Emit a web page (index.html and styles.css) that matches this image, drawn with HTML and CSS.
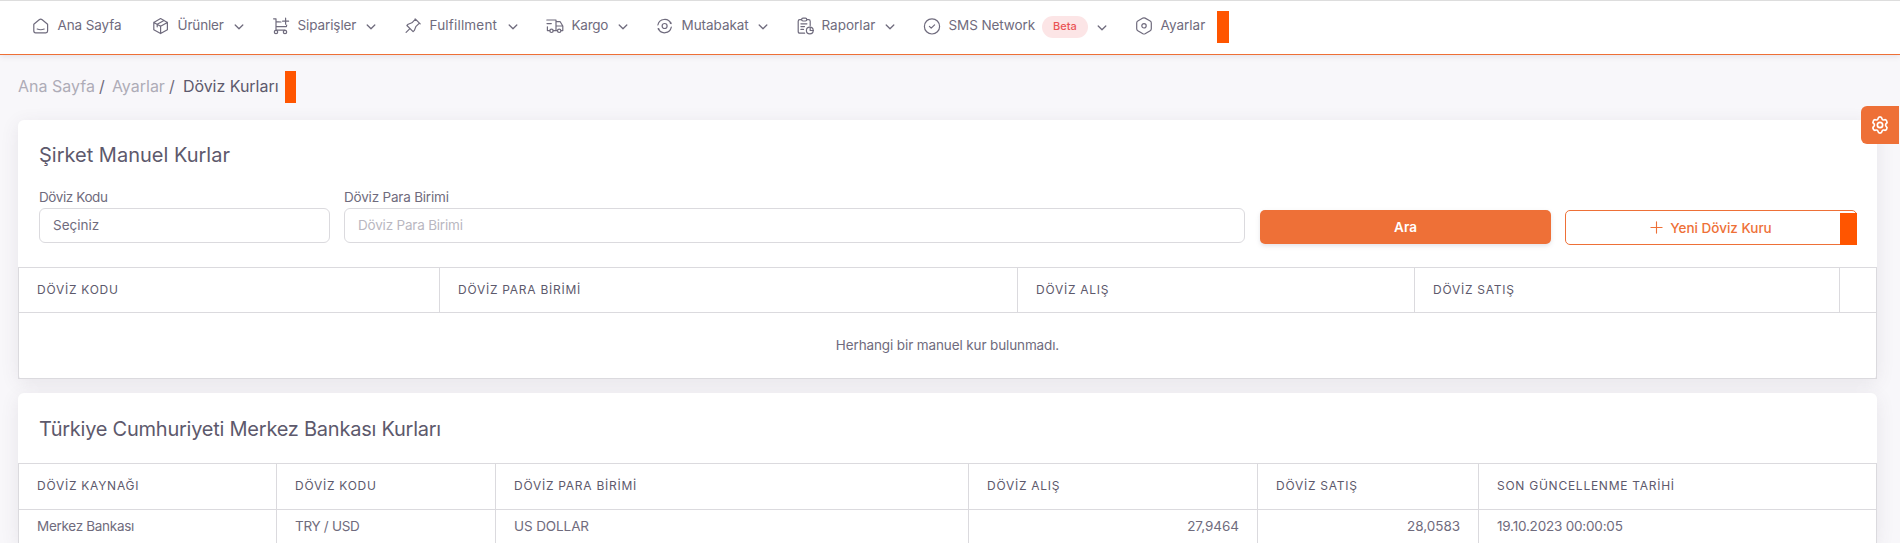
FILE: index.html
```
<!DOCTYPE html>
<html lang="tr">
<head>
<meta charset="utf-8">
<title>Döviz Kurları</title>
<link rel="stylesheet" href="styles.css">
</head>
<body>
<svg class="defs" width="0" height="0"><symbol id="chev" viewBox="0 0 10 8"><path d="M1.2 2 5 5.8 8.8 2"/></symbol></svg>
<nav class="nav">
  <a class="item"><svg class="icon" viewBox="0 0 18 18"><path d="M1.8 7.2 7.2 2.7q1.5-1.2 3 0l5.4 4.5v6.9q0 1.7-1.7 1.7H3.5q-1.7 0-1.7-1.7zM5.2 12q3.5 1.5 7 0"/></svg><span class="label l1">Ana Sayfa</span></a>
  <a class="item"><svg class="icon" viewBox="0 0 18 18"><path d="m8.6 1.6 6.8 3.8v7.4l-6.8 3.8-6.8-3.8V5.4zM1.8 5.4l6.8 3.8 6.8-3.8M8.6 9.2v7.4M12 3.5 5.2 7.3v2.5"/></svg><span class="label l2">Ürünler</span><svg class="chev"><use href="#chev"/></svg></a>
  <a class="item"><svg class="icon" viewBox="0 0 18 18"><circle cx="4" cy="15" r="1.7"/><circle cx="13" cy="15" r="1.7"/><path d="M13 13.2H4V1.8H1.6M4 4.6l5 .4M4 9.6h10.4l.3-1.6M10.6 4.2h6M13.6 1.2v6"/></svg><span class="label l3">Siparişler</span><svg class="chev"><use href="#chev"/></svg></a>
  <a class="item"><svg class="icon" viewBox="0 0 18 18"><path d="m11.500 2.200-3.600 3.600-3.700 1.400-1.300 1.300 6.200 6.200 1.300-1.300 1.400-3.700 3.600-3.600zM5.900 11.600l-3.800 3.800M11.100 1.800l5.100 5.100"/></svg><span class="label l4">Fulfillment</span><svg class="chev"><use href="#chev"/></svg></a>
  <a class="item"><svg class="icon" viewBox="0 0 18 18"><circle cx="5.5" cy="13.8" r="1.7"/><circle cx="13.2" cy="13.8" r="1.7"/><path d="M3.8 13.6H1.4V9.8M.8 3H10v10.6M7.2 13.7h4.2M10 4.7h4.2L16.8 9v4.6H15M10 9h6.8M1 6.6h4.3"/></svg><span class="label l5">Kargo</span><svg class="chev"><use href="#chev"/></svg></a>
  <a class="item"><svg class="icon" viewBox="0 0 18 18"><circle cx="8.6" cy="9" r="2.5"/><path d="M1.9 8A6.900 6.900 0 0 1 15 6.600M15.300 10.200A6.900 6.900 0 0 1 2.200 11.600"/><circle class="dot" cx="14.6" cy="6" r=".9"/><circle class="dot" cx="2.7" cy="12.2" r=".9"/></svg><span class="label l6">Mutabakat</span><svg class="chev"><use href="#chev"/></svg></a>
  <a class="item"><svg class="icon" viewBox="0 0 18 18"><path d="M8.6 16.2H3.8q-1.6 0-1.6-1.6V4.2q0-1.6 1.6-1.6h1.6M11 2.6h1.6q1.6 0 1.6 1.6v4.2M4.9 6.8h6M4.9 9.6h3.6M4.9 12.4h2.6M14.2 10v3.5h3.2"/><rect x="5.6" y="1.1" width="5.2" height="2.9" rx="1.4"/><circle cx="13.8" cy="13.5" r="3.4"/></svg><span class="label l7">Raporlar</span><svg class="chev"><use href="#chev"/></svg></a>
  <a class="item"><svg class="icon" viewBox="0 0 18 18"><circle cx="9" cy="9.4" r="7.6"/><path d="m6.4 9.4 1.8 1.8 3.4-3.4"/></svg><span class="label l8">SMS Network</span><span class="badge">Beta</span><svg class="chev low"><use href="#chev"/></svg></a>
  <a class="item"><svg class="icon" viewBox="0 0 18 18"><path d="M7.9 1.1q1.1-.6 2.2 0l5.1 2.9q1.1.6 1.1 1.9v5.9q0 1.3-1.1 1.9L10.1 16.7q-1.1.6-2.2 0L2.8 13.7q-1.1-.6-1.1-1.9V5.9q0-1.3 1.1-1.9z"/><circle cx="9" cy="8.8" r="2.2"/></svg><span class="label l9">Ayarlar</span></a>
  <span class="marker"></span>
</nav>
<div class="crumbs"><a class="c1">Ana Sayfa</a><i>/</i><a class="c2">Ayarlar</a><i>/</i><b class="c3">Döviz Kurları</b><span class="marker"></span></div>
<main>
  <section class="card first">
    <h5>Şirket Manuel Kurlar</h5>
    <form class="form">
      <div class="field"><label class="f1">Döviz Kodu</label><div class="input">Seçiniz</div></div>
      <div class="field wide"><label class="f3">Döviz Para Birimi</label><div class="input muted f3">Döviz Para Birimi</div></div>
      <div class="btn solid">Ara</div>
      <div class="btn outline"><svg class="plus" viewBox="0 0 14 14"><path d="M7 1v12M1 7h12"/></svg><span>Yeni Döviz Kuru</span><span class="marker"></span></div>
    </form>
    <table class="manual">
      <colgroup><col class="m1"><col class="m2"><col class="m3"><col class="m4"><col class="m5"></colgroup>
      <tr><th>DÖVİZ KODU</th><th>DÖVİZ PARA BİRİMİ</th><th>DÖVİZ ALIŞ</th><th>DÖVİZ SATIŞ</th><th></th></tr>
      <tr><td colspan="5" class="empty">Herhangi bir manuel kur bulunmadı.</td></tr>
    </table>
  </section>
  <section class="card second">
    <h5 class="t2">Türkiye Cumhuriyeti Merkez Bankası Kurları</h5>
    <table class="bank">
      <colgroup><col class="k1"><col class="k2"><col class="k3"><col class="k4"><col class="k5"><col class="k6"></colgroup>
      <tr><th>DÖVİZ KAYNAĞI</th><th>DÖVİZ KODU</th><th>DÖVİZ PARA BİRİMİ</th><th>DÖVİZ ALIŞ</th><th>DÖVİZ SATIŞ</th><th>SON GÜNCELLENME TARİHİ</th></tr>
      <tr><td>Merkez Bankası</td><td>TRY / USD</td><td class="name">US DOLLAR</td><td class="num">27,9464</td><td class="num">28,0583</td><td class="date">19.10.2023 00:00:05</td></tr>
    </table>
  </section>
</main>
<div class="settings"><svg viewBox="0 0 24 24"><path d="M12 2.3c1.3 0 2.3 1 2.5 2.300.2 1.100 1.300 1.700 2.300 1.300 1.200-.5 2.600 0 3.200 1.200.7 1.100.4 2.500-.6 3.300-.9.800-.9 2.400 0 3.200 1 .8 1.300 2.200.6 3.300-.6 1.200-2 1.700-3.200 1.200-1-.4-2.100.2-2.300 1.300-.2 1.300-1.200 2.300-2.500 2.300s-2.300-1-2.500-2.300c-.2-1.100-1.300-1.700-2.300-1.300-1.200.5-2.600 0-3.200-1.200-.7-1.100-.4-2.500.6-3.300.9-.8.900-2.400 0-3.200-1-.8-1.300-2.200-.6-3.300.6-1.200 2-1.700 3.200-1.200 1 .4 2.100-.2 2.300-1.300.2-1.300 1.200-2.300 2.500-2.300z"/><circle cx="12" cy="12" r="3.2"/></svg></div>
</body>
</html>
```
FILE: styles.css
```
* { box-sizing: border-box; }
html { overflow: hidden; }
body { margin: 0; height: 543px; overflow: hidden; background: #f8f7fa; color: #6f6b7d; font: 13.5px/20px Inter, "Liberation Sans", sans-serif; }
svg { fill: none; stroke: currentColor; stroke-linecap: round; stroke-linejoin: round; }
.defs { position: absolute; }
.marker { background: #ff5500; width: 12px; height: 32px; }

.nav { display: grid; grid-template-columns: 92px 92px 104px 114px 82px 112px 99px 184px 54px 12px; column-gap: 28px; align-items: start; height: 55px; padding: 10px 0 0 32px; background: #fff; border-top: 1px solid #ddd; border-bottom: 1px solid #ee6f36; box-shadow: 0 1px 6px rgba(75, 70, 92, .13); }
.item { display: flex; align-items: center; height: 30px; white-space: nowrap; }
.icon { width: 18px; height: 18px; margin: 0 7.500px 0 0; flex: none; stroke-width: 1.2; }
.dot { fill: currentColor; stroke: none; }
.label { line-height: 20px; margin-top: -2px; }
.l1, .l3 { letter-spacing: -.1px; }
.l2 { letter-spacing: -.15px; }
.l4 { letter-spacing: .18px; }
.l5 { letter-spacing: -.25px; }
.l6 { letter-spacing: -.05px; }
.l8 { letter-spacing: -.1px; }
.chev { width: 10px; height: 8px; margin: 2px 0 0 auto; stroke-width: 1.3; }
.chev.low { margin-top: 4px; }
.badge { height: 22px; width: 46px; margin: 2px 0 0 7px; border-radius: 11px; background: #fce5e6; color: #ea5455; font-size: 11px; line-height: 20px; text-align: center; font-weight: 500; }

.crumbs { display: flex; align-items: center; height: 32px; line-height: 20px; margin: 16px 0 0 18px; font-size: 16px; white-space: nowrap; color: #6f6b7d; }
.crumbs a, .crumbs i, .crumbs b { margin-top: -2px; }
.crumbs a { color: #aeacb7; }
.crumbs i { font-style: normal; margin-left: 4px; margin-right: 8px; width: 5px; }
.crumbs b { font-weight: 400; color: #5d596c; margin-left: 1px; letter-spacing: -.03px; }
.crumbs .marker { width: 11px; margin-left: 6px; }

main { display: flex; flex-direction: column; gap: 14px; padding: 17px 23px 0 18px; }
.card { background: #fff; border-radius: 6px; box-shadow: 0 4px 18px rgba(75, 70, 92, .1); }
.first { height: 259px; }
.second { height: 150px; overflow: hidden; border-radius: 6px 6px 0 0; }
h5 { margin: 0; padding: 21px 0 0 21px; font-size: 20px; line-height: 28px; font-weight: 400; color: #5d596c; }
.t2 { padding-top: 22px; letter-spacing: -.24px; }
.form { display: grid; grid-template-columns: 291px 902px 291px 292px; column-gap: 14px; padding: 18px 0 0 21px; height: 98px; }
.field label { display: block; line-height: 20px; }
.f1 { letter-spacing: -.4px; }
.f3 { letter-spacing: -.2px; }
.wide { width: 901px; }
.input { height: 35px; margin-top: 1px; border: 1px solid #dbdade; border-radius: 6px; padding: 0 13px; line-height: 32px; }
.muted { color: #b9b7c1; }
.btn { position: relative; display: flex; align-items: center; justify-content: center; height: 34px; margin-top: 23px; border-radius: 5px; font-weight: 600; }
.solid { background: #ee7037; color: #fff; box-shadow: 0 2px 4px rgba(165, 163, 174, .3); }
.outline { height: 35px; border: 1px solid #ee7037; color: #ee7037; font-weight: 500; }
.plus { width: 13px; height: 13px; margin-right: 7px; stroke-width: 1.2; }
.outline .marker { position: absolute; right: -1px; bottom: -1px; width: 17px; }

table { width: 1859px; border-collapse: collapse; table-layout: fixed; }
th, td { border: 1px solid #dbdade; padding: 0 18px; text-align: left; font-weight: 400; white-space: nowrap; }
th { height: 45px; color: #5d596c; font-size: 12px; letter-spacing: .74px; }
td { letter-spacing: -.3px; }
.empty { height: 66px; padding-bottom: 1px; text-align: center; letter-spacing: -.12px; }
.num { text-align: right; letter-spacing: -.05px; }
.name { letter-spacing: -.1px; }
.date { letter-spacing: -.2px; }
.m1 { width: 421px; } .m2 { width: 578px; } .m3 { width: 397px; } .m4 { width: 425px; } .m5 { width: 37px; }
.bank { margin-top: 20px; }
.bank th { height: 46px; padding-bottom: 1px; }
.bank td { height: 34px; padding-bottom: 2px; }
.k1 { width: 258px; } .k2 { width: 219px; } .k3 { width: 473px; } .k4 { width: 289px; } .k5 { width: 221px; } .k6 { width: 398px; }

.settings { position: absolute; right: 1px; top: 106px; width: 38px; height: 38px; display: flex; align-items: center; justify-content: center; background: #ee7037; color: #fff; border-radius: 6px 0 0 6px; }
.settings svg { width: 20px; height: 20px; stroke-width: 2; }
```
